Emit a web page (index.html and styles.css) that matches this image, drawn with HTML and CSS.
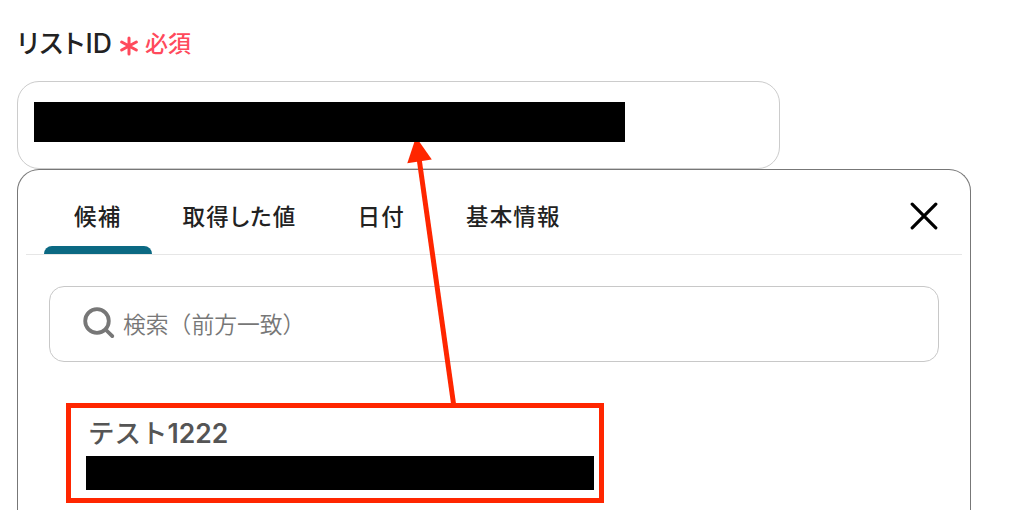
FILE: index.html
```html
<!DOCTYPE html>
<html lang="ja">
  <head>
    <meta charset="UTF-8" />
    <meta name="viewport" content="width=device-width, initial-scale=1.0" />
    <title>リストID</title>
    <link rel="stylesheet" href="styles.css">
  </head>
  <body>
    <div class="field">
      <div class="field-label">
        <span class="label-text">リスト<span class="latin">ID</span></span>
        <svg class="required-mark" viewBox="0 0 18 20" aria-hidden="true">
          <path d="M9 2v16M1.7 6l14.6 8M16.3 6L1.7 14" />
        </svg>
        <span class="required-text">必須</span>
      </div>
      <div class="field-input">
        <div class="masked masked-value"></div>
      </div>

      <div class="dropdown">
        <div class="dropdown-header">
          <nav class="tabs">
            <button class="tab active">候補</button>
            <button class="tab">取得した値</button>
            <button class="tab">日付</button>
            <button class="tab">基本情報</button>
          </nav>
          <button class="close" aria-label="閉じる">
            <svg viewBox="0 0 28 28"><path d="M2.2 2.2l23.6 23.6M25.8 2.2L2.2 25.8" /></svg>
          </button>
        </div>
        <div class="search">
          <svg class="search-icon" viewBox="0 0 32 32" aria-hidden="true">
            <circle cx="14" cy="14" r="11.8" />
            <path d="M22.5 22.5l6.8 6.6" />
          </svg>
          <span class="search-placeholder">検索（前方一致）</span>
        </div>
        <div class="option">
          <div class="option-name">テスト<span class="latin">1222</span></div>
          <div class="masked masked-option"></div>
        </div>
      </div>
    </div>

    <svg class="annotation" viewBox="0 0 1034 510" aria-hidden="true">
      <rect x="68.5" y="405.5" width="533" height="95" />
      <path class="arrow-line" d="M419 158L453.7 405" />
      <path class="arrow-head" d="M416 137L407.3 163.3L431.8 159.6z" />
    </svg>
  </body>
</html>
```

FILE: styles.css
```css
* {
  margin: 0;
  padding: 0;
  box-sizing: border-box;
}

body {
  width: 1034px;
  height: 510px;
  overflow: hidden;
  position: relative;
  background: #fff;
  color: #222;
  font-family: "Noto Sans CJK JP", sans-serif;
  font-feature-settings: "palt";
}

button {
  background: none;
  border: none;
  color: inherit;
  font: inherit;
  font-feature-settings: inherit;
  cursor: pointer;
}

.latin {
  font-family: Inter, "Noto Sans CJK JP", sans-serif;
}

.field {
  padding: 23px 0 0 17px;
}

.field-label {
  display: flex;
  align-items: center;
  height: 40px;
  white-space: nowrap;
}

.label-text {
  width: 103px;
  font-size: 26px;
  font-weight: 500;
  line-height: 38px;
  letter-spacing: 1.3px;
  margin-top: -2px;
}

.label-text .latin {
  font-size: 26.5px;
  letter-spacing: 0;
}

.required-mark {
  width: 18px;
  height: 20px;
  margin-top: 5px;
  fill: none;
  stroke: #ff4a5c;
  stroke-width: 3;
  stroke-linecap: round;
}

.required-text {
  margin: -2px 0 0 7px;
  color: #ff4a5c;
  font-size: 23px;
  font-weight: 500;
}

.field-input {
  width: 763px;
  height: 88px;
  margin-top: 18px;
  padding: 20px 16px;
  border: 1px solid #ccc;
  border-radius: 22px;
}

.masked {
  position: relative;
  z-index: 2;
  background: #000;
}

.masked-value {
  width: 591px;
  height: 40px;
}

.dropdown {
  width: 954px;
  height: 341px;
  padding: 0 8px;
  border: 1px solid #777;
  border-bottom: none;
  border-radius: 22px 22px 0 0;
}

.dropdown-header {
  display: flex;
  justify-content: space-between;
  align-items: center;
  height: 85px;
  border-bottom: 1px solid #e6e6e6;
}

.tabs {
  display: flex;
  height: 84px;
  padding-left: 17.5px;
}

.tab {
  padding: 6px 30.6px 0;
  font-size: 22.5px;
  font-weight: 500;
  letter-spacing: 1.15px;
}

.tab.active {
  position: relative;
}

.tab.active::after {
  content: "";
  position: absolute;
  left: 0;
  right: 0;
  bottom: 0;
  height: 8px;
  border-radius: 8px 8px 0 0;
  background: #0b6983;
}

.close {
  width: 28px;
  height: 28px;
  margin: 7px 24px 0 0;
}

.close svg {
  display: block;
  fill: none;
  stroke: #000;
  stroke-width: 3.2;
  stroke-linecap: round;
}

.search {
  display: flex;
  align-items: center;
  width: 890px;
  height: 76px;
  margin: 31px 0 0 23px;
  padding-left: 33px;
  border: 1px solid #c8c8c8;
  border-radius: 15px;
}

.search-icon {
  width: 32px;
  height: 32px;
  margin-top: -2px;
  fill: none;
  stroke: #777;
  stroke-width: 3.8;
  stroke-linecap: round;
}

.search-placeholder {
  margin: -2px 0 0 8px;
  color: #777;
  font-size: 22.8px;
  font-weight: 350;
  font-feature-settings: normal;
}

.option {
  width: 538px;
  margin: 41px 0 0 40px;
  padding: 10px 20px 0;
}

.option-name {
  height: 43px;
  padding-left: 2px;
  color: #555;
  font-size: 26.5px;
  font-weight: 500;
  font-feature-settings: normal;
  line-height: 38px;
}

.option-name .latin {
  font-weight: 600;
}

.masked-option {
  width: 508px;
  height: 34px;
}

/* Highlight box and arrow drawn over the form */
.annotation {
  position: absolute;
  top: 0;
  left: 0;
  z-index: 1;
  width: 1034px;
  height: 510px;
  fill: none;
  stroke: #ff2600;
  stroke-width: 5;
  pointer-events: none;
}

.annotation .arrow-head {
  fill: #ff2600;
  stroke: none;
}
```
